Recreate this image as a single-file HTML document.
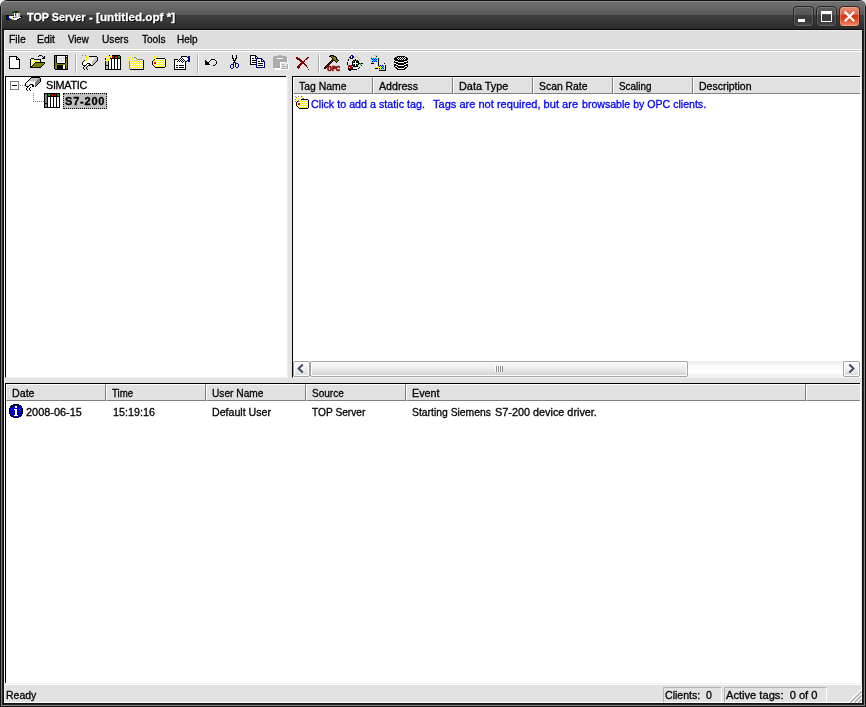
<!DOCTYPE html>
<html><head><meta charset="utf-8"><title>TOP Server</title>
<style>
*{box-sizing:border-box;margin:0;padding:0}
html,body{width:866px;height:707px;overflow:hidden;background:#fff}
body{position:relative;font-family:"Liberation Sans",sans-serif;font-size:11px;color:#000;-webkit-font-smoothing:none}
.a{position:absolute}
.t{transform-origin:0 0;position:absolute;white-space:pre;line-height:13px;height:13px;-webkit-text-stroke:.3px currentColor}
#win{will-change:transform;left:0;top:0;width:866px;height:707px;background:#111;border-radius:7px 7px 0 0;overflow:hidden}
#title{left:1px;top:0;width:864px;height:30px;border-radius:6px 6px 0 0;box-shadow:inset 1px 0 0 #7c7c7c,inset -1px 0 0 #7c7c7c;background:linear-gradient(#111 0,#111 1px,#8a8a8a 1px,#8a8a8a 2px,#6f6f6f 2px,#666 8px,#565656 15px,#3f3f3f 15px,#353535 22px,#2b2b2b 29px,#0c0c0c 29px,#0c0c0c 30px)}
#client{left:4px;top:30px;width:858px;height:673px;background:#e2e2e2}
#menubar{left:4px;top:30px;width:858px;height:19px;background:#dedede;border-top:1px solid #ebebeb}
.hdr{position:absolute;height:17px;background:#e1e1e1;border-left:1px solid #fff;border-top:1px solid #fff;border-right:1px solid #7c7c7c;border-bottom:1px solid #808080}
.panel{position:absolute;background:#fff}

.cb{width:21px;height:21px;border-radius:4px;border:1px solid #262626;box-shadow:inset 0 0 0 1px rgba(255,255,255,.16);background:linear-gradient(#5f5f5f 0,#545454 8px,#3d3d3d 8px,#3a3a3a 14px,#484848 19px)}
.cb.red{background:linear-gradient(#e9917a 0,#dd6146 8px,#d9340f 8px,#e0421c 12px,#f08e70 19px);border-color:#3a2620;box-shadow:inset 0 0 0 1px rgba(255,200,180,.35)}
.sep{width:2px;height:19px;border-left:1px solid #b4b4b4;border-right:1px solid #fff}

.sbtn{width:17px;height:16px;border:1px solid #a4a4a4;border-radius:2px;box-shadow:inset 0 0 0 1px #fff;background:linear-gradient(#fdfdfd 0,#f2f2f2 45%,#dedede 85%,#d6d6d6 100%)}
.pane{height:16px;border-top:1px solid #b4b4b4;border-left:1px solid #b4b4b4;border-right:1px solid #fff;border-bottom:1px solid #fff}
</style></head><body>
<div class="a" style="left:858px;top:0;width:8px;height:8px;background:#dcdcdc"></div>
<div id="win" class="a">
<div id="title" class="a"></div>
<div class="a" style="left:1px;top:29px;width:1px;height:677px;background:#808080"></div>
<div class="a" style="left:2px;top:30px;width:1px;height:675px;background:#222"></div>
<div class="a" style="left:864px;top:29px;width:1px;height:677px;background:#808080"></div>
<div class="a" style="left:863px;top:30px;width:1px;height:675px;background:#222"></div>
<div class="a" style="left:1px;top:705px;width:864px;height:1px;background:#808080"></div>
<div class="a" style="left:2px;top:704px;width:862px;height:1px;background:#222"></div>
<div id="client" class="a"></div>
<div id="menubar" class="a"></div>

<!-- title text -->
<div class="t" id="ttl0" style="left:26.5px;top:11px;color:#fff;font-weight:bold;font-size:11.4px;text-shadow:1px 1px 0 #000;transform:scaleX(0.95)">TOP Server</div>
<div class="t" id="ttl1" style="left:89px;top:11px;color:#fff;font-weight:bold;font-size:11.4px;text-shadow:1px 1px 0 #000;transform:scaleX(1)">-</div>
<div class="t" id="ttl2" style="left:96px;top:11px;color:#fff;font-weight:bold;font-size:11.4px;text-shadow:1px 1px 0 #000;transform:scaleX(1.025)">[untitled.opf *]</div>
<!-- caption buttons -->
<div class="a cb" style="left:793px;top:6px"><div class="a" style="left:4px;top:12px;width:7px;height:3px;background:#fff"></div></div>
<div class="a cb" style="left:816px;top:6px"><div class="a" style="left:4px;top:4px;width:11px;height:11px;border:1px solid #fff;border-top-width:3px"></div></div>
<div class="a cb red" style="left:839px;top:6px"><svg class="a" style="left:-1px;top:-1px" width="21" height="21" viewBox="0 0 21 21"><path d="M5.8 5.8 L15.2 15.2 M15.2 5.8 L5.8 15.2" stroke="#fff" stroke-width="2.3" fill="none"/></svg></div>
<!-- menu -->
<div class="t" style="left:9px;top:33px;transform:scaleX(0.94)">File</div>
<div class="t" style="left:37px;top:33px;transform:scaleX(0.95)">Edit</div>
<div class="t" style="left:68px;top:33px;transform:scaleX(0.871)">View</div>
<div class="t" style="left:101.5px;top:33px;transform:scaleX(0.921)">Users</div>
<div class="t" style="left:141.5px;top:33px;transform:scaleX(0.912)">Tools</div>
<div class="t" style="left:177px;top:33px;transform:scaleX(0.914)">Help</div>
<div class="a" style="left:4px;top:49px;width:858px;height:3px;background:#fff"></div>
<div class="a" style="left:4px;top:50px;width:858px;height:1px;background:#c4c4c4"></div>
<!-- toolbar separators -->
<div class="a sep" style="left:75px;top:54px"></div>
<div class="a sep" style="left:197px;top:54px"></div>
<div class="a sep" style="left:318px;top:54px"></div>
<!-- tree panel -->
<div class="panel" id="tree" style="left:5px;top:76px;width:281px;height:302px;border-top:1px solid #000;border-left:1px solid #000;border-bottom:1px solid #f4f4f4"></div>
<div class="a" style="left:286px;top:76px;width:1px;height:302px;background:#fff"></div>
<div class="a" style="left:287px;top:76px;width:1px;height:302px;background:#ececec"></div>
<!-- right panel -->
<div class="panel" id="tags" style="left:292px;top:76px;width:568px;height:302px;border-top:1px solid #000;border-left:1px solid #000;border-bottom:1px solid #f4f4f4"></div>
<!-- bottom panel -->
<div class="panel" id="log" style="left:5px;top:383px;width:855px;height:300px;border-top:1px solid #000;border-left:1px solid #000"></div>

<div class="a" style="left:860px;top:76px;width:1px;height:302px;background:#fff"></div>
<div class="a" style="left:860px;top:383px;width:1px;height:301px;background:#fff"></div>
<!-- tags header -->
<div class="hdr" style="left:293px;top:77px;width:80px"></div>
<div class="hdr" style="left:373px;top:77px;width:80px"></div>
<div class="hdr" style="left:453px;top:77px;width:80px"></div>
<div class="hdr" style="left:533px;top:77px;width:80px"></div>
<div class="hdr" style="left:613px;top:77px;width:80px"></div>
<div class="hdr" style="left:693px;top:77px;width:167px;border-right:0"></div>
<div class="t" style="left:299px;top:80px;transform:scaleX(0.946)">Tag Name</div>
<div class="t" style="left:378.5px;top:80px;transform:scaleX(0.965)">Address</div>
<div class="t" style="left:458.5px;top:80px;transform:scaleX(0.988)">Data Type</div>
<div class="t" style="left:538.5px;top:80px;transform:scaleX(0.945)">Scan Rate</div>
<div class="t" style="left:618.5px;top:80px;transform:scaleX(0.900)">Scaling</div>
<div class="t" style="left:698.5px;top:80px;transform:scaleX(0.955)">Description</div>
<div class="t" style="left:310.5px;top:98px;color:#0000ff;transform:scaleX(0.975)">Click to add a static tag.</div>
<div class="t" style="left:433px;top:98px;color:#0000ff;transform:scaleX(1.005)">Tags are not required, but are</div>
<div class="t" style="left:582px;top:98px;color:#0000ff;transform:scaleX(0.962)">browsable by OPC clients.</div>
<!-- h scrollbar -->
<div class="a" id="hsb" style="left:293px;top:361px;width:567px;height:16px;background:linear-gradient(#ececec 0,#fbfbfb 35%,#fff 70%,#ececec 100%)"></div>
<div class="a sbtn" style="left:293px;top:361px"><svg width="15" height="14" class="a" style="left:0;top:0"><path d="M8.8 2.6 L4.6 6.5 L8.8 10.4" stroke="#3f4c63" stroke-width="2" fill="none"/></svg></div>
<div class="a sbtn" style="left:843px;top:361px"><svg width="15" height="14" class="a" style="left:0;top:0"><path d="M5.3 2.6 L9.5 6.5 L5.3 10.4" stroke="#3f4c63" stroke-width="2" fill="none"/></svg></div>
<div class="a sbtn" id="thumb" style="left:310px;top:361px;width:378px;background:linear-gradient(#f8f8f8 0,#eeeeee 40%,#e0e0e0 70%,#d2d2d2 100%)"></div>
<div class="a" style="left:495px;top:366px;width:2px;height:6px;background:linear-gradient(90deg,#fff 50%,#8e8e8e 50%)"></div>
<div class="a" style="left:497px;top:366px;width:2px;height:6px;background:linear-gradient(90deg,#fff 50%,#8e8e8e 50%)"></div>
<div class="a" style="left:499px;top:366px;width:2px;height:6px;background:linear-gradient(90deg,#fff 50%,#8e8e8e 50%)"></div>
<div class="a" style="left:501px;top:366px;width:2px;height:6px;background:linear-gradient(90deg,#fff 50%,#8e8e8e 50%)"></div>
<!-- log header -->
<div class="hdr" style="left:6px;top:384px;width:100px"></div>
<div class="hdr" style="left:106px;top:384px;width:100px"></div>
<div class="hdr" style="left:206px;top:384px;width:100px"></div>
<div class="hdr" style="left:306px;top:384px;width:100px"></div>
<div class="hdr" style="left:406px;top:384px;width:400px"></div>
<div class="hdr" style="left:806px;top:384px;width:54px;border-right:0"></div>
<div class="t" style="left:12px;top:387px;transform:scaleX(0.971)">Date</div>
<div class="t" style="left:112px;top:387px;transform:scaleX(0.879)">Time</div>
<div class="t" style="left:212px;top:387px;transform:scaleX(0.925)">User Name</div>
<div class="t" style="left:312px;top:387px;transform:scaleX(0.911)">Source</div>
<div class="t" style="left:411.5px;top:387px;transform:scaleX(0.979)">Event</div>
<div class="t" style="left:26px;top:406px;transform:scaleX(0.993)">2008-06-15</div>
<div class="t" style="left:113px;top:406px;transform:scaleX(0.979)">15:19:16</div>
<div class="t" style="left:212px;top:406px;transform:scaleX(0.966)">Default User</div>
<div class="t" style="left:312px;top:406px;transform:scaleX(0.926)">TOP Server</div>
<div class="t" style="left:411.5px;top:406px;transform:scaleX(0.943)">Starting Siemens</div>
<div class="t" style="left:495px;top:406px;transform:scaleX(0.986)">S7-200 device driver.</div>
<!-- status bar -->
<div class="a" style="left:4px;top:683px;width:858px;height:1px;background:#f0f0f0"></div>
<div class="a" style="left:4px;top:684px;width:858px;height:1px;background:#fff"></div>
<div class="a" style="left:4px;top:31px;width:1px;height:672px;background:#f4f4f4"></div>
<div class="a" style="left:861px;top:685px;width:1px;height:18px;background:#fff"></div>
<div class="a" style="left:4px;top:702px;width:858px;height:1px;background:#fff"></div>
<div class="t" style="left:5.5px;top:689px;transform:scaleX(0.953)">Ready</div>
<div class="a pane" style="left:663px;top:687px;width:59px"></div>
<div class="a pane" style="left:724px;top:687px;width:103px"></div>
<div class="t" style="left:665px;top:689px;transform:scaleX(0.961)">Clients:  0</div>
<div class="t" style="left:725.5px;top:689px;transform:scaleX(1.011)">Active tags:  0 of 0</div>
<svg class="a" style="left:848px;top:689px" width="14" height="14" shape-rendering="crispEdges"><path d="M13 1L1 13M13 5L5 13M13 9L9 13" stroke="#fff" stroke-width="1.4" fill="none" shape-rendering="auto"/><path d="M13.5 2.5L2.5 13.5M13.5 6.5L6.5 13.5M13.5 10.5L10.5 13.5" stroke="#a8a8a8" stroke-width="1.4" fill="none" shape-rendering="auto"/></svg>
<!-- tree -->
<div class="a" style="left:10px;top:81px;width:9px;height:9px;border:1px solid #808080;background:#fff"></div>
<div class="a" style="left:12px;top:85px;width:5px;height:1px;background:#000"></div>
<div class="a" style="left:20px;top:85px;width:5px;height:1px;background-image:linear-gradient(90deg,#808080 50%,transparent 50%);background-size:2px 1px"></div>
<div class="a" style="left:33px;top:93px;width:1px;height:8px;background-image:linear-gradient(#808080 50%,transparent 50%);background-size:1px 2px"></div>
<div class="a" style="left:33px;top:101px;width:11px;height:1px;background-image:linear-gradient(90deg,#808080 50%,transparent 50%);background-size:2px 1px"></div>
<div class="t" style="left:46px;top:79px;letter-spacing:-.3px;transform:scaleX(0.981)">SIMATIC</div>
<div class="a" style="left:63px;top:93px;width:44px;height:16px;background:#c0c0c0;border:1px dotted #000"></div>
<div class="t" style="left:65px;top:95px;font-weight:bold;letter-spacing:.8px">S7-200</div>
<!-- ICONS START -->
<svg class="a" width="0" height="0" style="left:0;top:0"><defs><pattern id="dy" width="2" height="2" patternUnits="userSpaceOnUse"><rect width="2" height="2" fill="#ffff00"/><rect x="1" width="1" height="1" fill="#fff"/><rect y="1" width="1" height="1" fill="#fff"/></pattern><pattern id="dk" width="2" height="2" patternUnits="userSpaceOnUse"><rect width="2" height="2" fill="#fff"/><rect x="1" width="1" height="1" fill="#000"/><rect y="1" width="1" height="1" fill="#000"/></pattern><pattern id="db" width="2" height="2" patternUnits="userSpaceOnUse"><rect width="2" height="2" fill="#0000ff"/><rect width="1" height="1" fill="#000080"/><rect x="1" y="1" width="1" height="1" fill="#000080"/></pattern></defs></svg>
<svg class="a ic" style="left:7px;top:55px" width="16" height="14" viewBox="0 0 16 14" shape-rendering="crispEdges"><path fill="#000" d="M2 1h8v1h-8zM2 2h1v1h-1zM9 2h2v1h-2zM2 3h1v1h-1zM9 3h1v1h-1zM11 3h1v1h-1zM2 4h1v1h-1zM9 4h4v1h-4zM2 5h1v1h-1zM12 5h1v1h-1zM2 6h1v1h-1zM12 6h1v1h-1zM2 7h1v1h-1zM12 7h1v1h-1zM2 8h1v1h-1zM12 8h1v1h-1zM2 9h1v1h-1zM12 9h1v1h-1zM2 10h1v1h-1zM12 10h1v1h-1zM2 11h1v1h-1zM12 11h1v1h-1zM2 12h1v1h-1zM12 12h1v1h-1zM2 13h11v1h-11z"/><path fill="#fff" d="M3 2h6v1h-6zM3 3h6v1h-6zM10 3h1v1h-1zM3 4h6v1h-6zM3 5h9v1h-9zM3 6h9v1h-9zM3 7h9v1h-9zM3 8h9v1h-9zM3 9h9v1h-9zM3 10h9v1h-9zM3 11h9v1h-9zM3 12h9v1h-9z"/></svg>
<svg class="a ic" style="left:30px;top:55px" width="16" height="13" viewBox="0 0 16 13" shape-rendering="crispEdges"><path fill="#000" d="M9 0h3v1h-3zM8 1h1v1h-1zM12 1h1v1h-1zM14 1h1v1h-1zM13 2h2v1h-2zM1 3h3v1h-3zM12 3h3v1h-3zM0 4h1v1h-1zM4 4h7v1h-7zM0 5h1v1h-1zM10 5h1v1h-1zM0 6h1v1h-1zM10 6h1v1h-1zM0 7h1v1h-1zM5 7h10v1h-10zM0 8h1v1h-1zM4 8h1v1h-1zM14 8h1v1h-1zM0 9h1v1h-1zM3 9h1v1h-1zM13 9h1v1h-1zM0 10h1v1h-1zM2 10h1v1h-1zM12 10h1v1h-1zM0 11h2v1h-2zM11 11h1v1h-1zM0 12h11v1h-11z"/><path fill="url(#dy)" d="M1 4h3v1h-3zM1 5h9v1h-9zM1 6h9v1h-9zM1 7h4v1h-4zM1 8h3v1h-3zM1 9h2v1h-2zM1 10h1v1h-1z"/><path fill="#808000" d="M5 8h9v1h-9zM4 9h9v1h-9zM3 10h9v1h-9zM2 11h9v1h-9z"/></svg>
<svg class="a ic" style="left:53px;top:55px" width="16" height="15" viewBox="0 0 16 15" shape-rendering="crispEdges"><path fill="#000" d="M1 0h14v1h-14zM1 1h1v1h-1zM3 1h1v1h-1zM12 1h1v1h-1zM14 1h1v1h-1zM1 2h1v1h-1zM3 2h1v1h-1zM12 2h3v1h-3zM1 3h1v1h-1zM3 3h1v1h-1zM12 3h1v1h-1zM14 3h1v1h-1zM1 4h1v1h-1zM3 4h1v1h-1zM12 4h1v1h-1zM14 4h1v1h-1zM1 5h1v1h-1zM3 5h1v1h-1zM12 5h1v1h-1zM14 5h1v1h-1zM1 6h1v1h-1zM3 6h1v1h-1zM12 6h1v1h-1zM14 6h1v1h-1zM1 7h1v1h-1zM3 7h1v1h-1zM12 7h1v1h-1zM14 7h1v1h-1zM1 8h1v1h-1zM4 8h8v1h-8zM14 8h1v1h-1zM1 9h1v1h-1zM14 9h1v1h-1zM1 10h1v1h-1zM4 10h6v1h-6zM12 10h1v1h-1zM14 10h1v1h-1zM1 11h1v1h-1zM4 11h6v1h-6zM12 11h1v1h-1zM14 11h1v1h-1zM1 12h1v1h-1zM4 12h6v1h-6zM12 12h1v1h-1zM14 12h1v1h-1zM1 13h1v1h-1zM4 13h6v1h-6zM12 13h1v1h-1zM14 13h1v1h-1zM2 14h13v1h-13z"/><path fill="#808000" d="M2 1h1v1h-1zM2 2h1v1h-1zM2 3h1v1h-1zM13 3h1v1h-1zM2 4h1v1h-1zM13 4h1v1h-1zM2 5h1v1h-1zM13 5h1v1h-1zM2 6h1v1h-1zM13 6h1v1h-1zM2 7h1v1h-1zM13 7h1v1h-1zM2 8h2v1h-2zM12 8h2v1h-2zM2 9h12v1h-12zM2 10h2v1h-2zM13 10h1v1h-1zM2 11h2v1h-2zM13 11h1v1h-1zM2 12h2v1h-2zM13 12h1v1h-1zM2 13h2v1h-2zM13 13h1v1h-1z"/><path fill="#fff" d="M4 1h8v1h-8zM13 1h1v1h-1zM4 2h1v1h-1zM11 2h1v1h-1zM4 3h1v1h-1zM11 3h1v1h-1zM4 4h1v1h-1zM11 4h1v1h-1zM4 5h1v1h-1zM11 5h1v1h-1zM4 6h1v1h-1zM11 6h1v1h-1zM4 7h8v1h-8zM10 10h2v1h-2zM10 11h2v1h-2zM10 12h2v1h-2zM10 13h2v1h-2z"/><path fill="#e2e2e2" d="M5 2h6v1h-6zM5 3h6v1h-6zM5 4h6v1h-6zM5 5h6v1h-6zM5 6h6v1h-6z"/></svg>
<svg class="a ic" style="left:82px;top:55px" width="16" height="15" viewBox="0 0 16 15" shape-rendering="crispEdges"><path fill="#808080" d="M0 0h1v1h-1zM3 0h1v1h-1z"/><path fill="#ffff00" d="M7 0h1v1h-1zM4 1h1v1h-1zM6 1h1v1h-1zM1 2h1v1h-1zM3 2h2v1h-2zM4 3h2v1h-2zM1 4h1v1h-1zM4 4h2v1h-2zM4 5h1v1h-1z"/><path fill="#000" d="M7 1h8v1h-8zM15 2h1v1h-1zM15 3h1v1h-1zM15 4h1v1h-1zM2 5h1v1h-1zM15 5h1v1h-1zM1 6h1v1h-1zM14 6h1v1h-1zM0 7h1v1h-1zM13 7h1v1h-1zM0 8h1v1h-1zM5 8h3v1h-3zM12 8h1v1h-1zM0 9h1v1h-1zM4 9h1v1h-1zM7 9h2v1h-2zM11 9h1v1h-1zM1 10h3v1h-3zM6 10h5v1h-5zM2 11h1v1h-1zM5 11h1v1h-1zM1 12h1v1h-1zM4 12h1v1h-1zM1 13h1v1h-1zM4 13h1v1h-1zM2 14h1v1h-1zM5 14h1v1h-1z"/><path fill="#ececec" d="M6 2h8v1h-8zM6 3h7v1h-7zM6 4h6v1h-6z"/><path fill="#c0c0c0" d="M14 2h1v1h-1zM13 3h2v1h-2zM12 4h3v1h-3zM11 5h4v1h-4zM10 6h4v1h-4zM10 7h3v1h-3zM10 8h2v1h-2zM10 9h1v1h-1z"/><path fill="#fff" d="M5 5h6v1h-6zM2 6h8v1h-8zM1 7h9v1h-9zM1 8h4v1h-4zM8 8h2v1h-2zM1 9h3v1h-3zM5 9h2v1h-2zM9 9h1v1h-1z"/></svg>
<svg class="a ic" style="left:105px;top:55px" width="16" height="15" viewBox="0 0 16 15" shape-rendering="crispEdges"><path fill="#ffff00" d="M0 0h1v1h-1zM6 0h1v1h-1zM1 1h1v1h-1zM3 1h1v1h-1zM5 1h1v1h-1zM0 2h1v1h-1zM2 2h1v1h-1zM2 3h3v1h-3zM1 4h1v1h-1zM3 4h2v1h-2zM0 5h2v1h-2zM3 5h1v1h-1z"/><path fill="#000" d="M4 0h1v1h-1zM7 0h8v1h-8zM9 1h1v1h-1zM12 1h1v1h-1zM15 1h1v1h-1zM9 2h1v1h-1zM12 2h1v1h-1zM15 2h1v1h-1zM0 3h1v1h-1zM5 3h11v1h-11zM0 4h1v1h-1zM6 4h1v1h-1zM9 4h1v1h-1zM12 4h1v1h-1zM15 4h1v1h-1zM6 5h1v1h-1zM9 5h1v1h-1zM12 5h1v1h-1zM15 5h1v1h-1zM0 6h1v1h-1zM3 6h1v1h-1zM6 6h1v1h-1zM9 6h1v1h-1zM12 6h1v1h-1zM15 6h1v1h-1zM0 7h1v1h-1zM3 7h1v1h-1zM6 7h1v1h-1zM9 7h1v1h-1zM12 7h1v1h-1zM15 7h1v1h-1zM0 8h1v1h-1zM3 8h1v1h-1zM6 8h1v1h-1zM9 8h1v1h-1zM12 8h1v1h-1zM15 8h1v1h-1zM0 9h1v1h-1zM3 9h1v1h-1zM6 9h1v1h-1zM9 9h1v1h-1zM12 9h1v1h-1zM15 9h1v1h-1zM0 10h4v1h-4zM6 10h1v1h-1zM9 10h1v1h-1zM12 10h1v1h-1zM15 10h1v1h-1zM0 11h1v1h-1zM3 11h1v1h-1zM6 11h1v1h-1zM9 11h1v1h-1zM12 11h1v1h-1zM15 11h1v1h-1zM0 12h1v1h-1zM3 12h1v1h-1zM6 12h1v1h-1zM9 12h1v1h-1zM12 12h1v1h-1zM15 12h1v1h-1zM0 13h1v1h-1zM3 13h1v1h-1zM6 13h1v1h-1zM9 13h1v1h-1zM12 13h1v1h-1zM15 13h1v1h-1zM0 14h16v1h-16z"/><path fill="#c80000" d="M7 1h2v1h-2zM10 1h2v1h-2zM7 2h2v1h-2zM10 2h2v1h-2z"/><path fill="#00a000" d="M13 1h2v1h-2zM13 2h2v1h-2z"/><path fill="#808080" d="M5 2h1v1h-1z"/><path fill="#fff" d="M6 2h1v1h-1zM5 4h1v1h-1zM7 4h2v1h-2zM10 4h2v1h-2zM13 4h2v1h-2zM4 5h2v1h-2zM7 5h2v1h-2zM10 5h2v1h-2zM13 5h2v1h-2zM4 6h2v1h-2zM7 6h2v1h-2zM10 6h2v1h-2zM13 6h2v1h-2zM4 7h2v1h-2zM7 7h2v1h-2zM10 7h2v1h-2zM13 7h2v1h-2zM4 8h2v1h-2zM7 8h2v1h-2zM10 8h2v1h-2zM13 8h2v1h-2zM4 9h2v1h-2zM7 9h2v1h-2zM10 9h2v1h-2zM13 9h2v1h-2zM4 10h2v1h-2zM7 10h2v1h-2zM10 10h2v1h-2zM13 10h2v1h-2zM4 11h2v1h-2zM7 11h2v1h-2zM10 11h2v1h-2zM13 11h2v1h-2zM4 12h2v1h-2zM7 12h2v1h-2zM10 12h2v1h-2zM13 12h2v1h-2zM4 13h2v1h-2zM7 13h2v1h-2zM10 13h2v1h-2zM13 13h2v1h-2z"/><path fill="#c0c0c0" d="M1 6h2v1h-2zM1 7h2v1h-2zM1 8h2v1h-2zM1 9h2v1h-2zM1 11h2v1h-2zM1 12h2v1h-2zM1 13h2v1h-2z"/></svg>
<svg class="a ic" style="left:128px;top:55px" width="16" height="15" viewBox="0 0 16 15" shape-rendering="crispEdges"><path fill="#ffff00" d="M6 0h1v1h-1zM3 1h1v1h-1zM5 1h1v1h-1zM0 2h1v1h-1zM2 2h2v1h-2zM3 3h2v1h-2zM0 4h1v1h-1zM4 4h1v1h-1zM8 4h1v1h-1zM3 5h1v1h-1z"/><path fill="#808080" d="M6 2h2v1h-2zM8 3h1v1h-1zM9 4h6v1h-6zM1 6h1v1h-1zM1 7h1v1h-1zM1 8h1v1h-1zM1 9h1v1h-1zM1 10h1v1h-1zM1 11h1v1h-1zM1 12h1v1h-1zM1 13h1v1h-1z"/><path fill="url(#dy)" d="M9 5h6v1h-6zM2 6h13v1h-13zM2 7h13v1h-13zM2 8h13v1h-13zM2 9h13v1h-13zM2 10h13v1h-13zM2 11h13v1h-13zM2 12h13v1h-13zM2 13h13v1h-13z"/><path fill="#000" d="M15 5h1v1h-1zM15 6h1v1h-1zM15 7h1v1h-1zM15 8h1v1h-1zM15 9h1v1h-1zM15 10h1v1h-1zM15 11h1v1h-1zM15 12h1v1h-1zM15 13h1v1h-1zM2 14h14v1h-14z"/></svg>
<svg class="a ic" style="left:151px;top:55px" width="16" height="13" viewBox="0 0 16 13" shape-rendering="crispEdges"><path fill="#ffff00" d="M6 0h1v1h-1zM3 1h1v1h-1zM5 1h1v1h-1zM0 2h1v1h-1zM2 2h2v1h-2zM3 3h1v1h-1zM0 4h1v1h-1zM4 4h1v1h-1zM3 5h1v1h-1z"/><path fill="#000" d="M5 3h9v1h-9zM3 4h1v1h-1zM14 4h1v1h-1zM2 5h1v1h-1zM14 5h1v1h-1zM1 6h1v1h-1zM14 6h1v1h-1zM1 7h1v1h-1zM14 7h1v1h-1zM1 8h1v1h-1zM14 8h1v1h-1zM1 9h1v1h-1zM14 9h1v1h-1zM2 10h1v1h-1zM14 10h1v1h-1zM3 11h1v1h-1zM14 11h1v1h-1zM4 12h10v1h-10z"/><path fill="url(#dy)" d="M5 4h9v1h-9zM4 5h10v1h-10zM2 6h12v1h-12zM2 7h1v1h-1zM5 7h9v1h-9zM2 8h1v1h-1zM5 8h9v1h-9zM2 9h12v1h-12zM3 10h11v1h-11zM4 11h10v1h-10z"/><path fill="#ff0000" d="M3 7h2v1h-2zM3 8h2v1h-2z"/></svg>
<svg class="a ic" style="left:174px;top:55px" width="16" height="15" viewBox="0 0 16 15" shape-rendering="crispEdges"><path fill="#000" d="M7 1h6v1h-6zM13 2h1v1h-1zM0 4h4v1h-4zM0 5h1v1h-1zM13 5h1v1h-1zM0 6h1v1h-1zM11 6h2v1h-2zM0 7h1v1h-1zM11 7h1v1h-1zM0 8h1v1h-1zM11 8h1v1h-1zM0 9h1v1h-1zM11 9h1v1h-1zM0 10h1v1h-1zM2 10h2v1h-2zM5 10h5v1h-5zM11 10h1v1h-1zM0 11h1v1h-1zM11 11h1v1h-1zM0 12h1v1h-1zM2 12h2v1h-2zM5 12h5v1h-5zM11 12h1v1h-1zM0 13h1v1h-1zM11 13h1v1h-1zM0 14h12v1h-12z"/><path fill="#000080" d="M14 1h2v1h-2zM14 2h2v1h-2zM14 3h2v1h-2zM14 4h2v1h-2zM14 5h2v1h-2zM14 6h2v1h-2z"/><path fill="url(#dk)" d="M6 2h2v1h-2zM5 3h4v1h-4zM4 4h6v1h-6zM3 5h8v1h-8zM2 6h9v1h-9zM3 7h1v1h-1zM7 7h3v1h-3zM8 8h1v1h-1z"/><path fill="#fff" d="M8 2h5v1h-5zM9 3h5v1h-5zM10 4h4v1h-4zM1 5h2v1h-2zM11 5h2v1h-2zM1 6h1v1h-1zM1 7h2v1h-2zM4 7h3v1h-3zM10 7h1v1h-1zM1 8h7v1h-7zM9 8h2v1h-2zM1 9h10v1h-10zM1 10h1v1h-1zM4 10h1v1h-1zM10 10h1v1h-1zM1 11h10v1h-10zM1 12h1v1h-1zM4 12h1v1h-1zM10 12h1v1h-1zM1 13h10v1h-10z"/></svg>
<svg class="a ic" style="left:203px;top:55px" width="16" height="11" viewBox="0 0 16 11" shape-rendering="crispEdges"><path fill="#000" d="M8 4h4v1h-4zM2 5h1v1h-1zM7 5h1v1h-1zM12 5h1v1h-1zM2 6h2v1h-2zM6 6h1v1h-1zM13 6h1v1h-1zM2 7h4v1h-4zM13 7h1v1h-1zM2 8h4v1h-4zM13 8h1v1h-1zM2 9h5v1h-5zM12 9h1v1h-1zM10 10h2v1h-2z"/></svg>
<svg class="a ic" style="left:226px;top:55px" width="16" height="14" viewBox="0 0 16 14" shape-rendering="crispEdges"><path fill="#000" d="M6 0h1v1h-1zM10 0h1v1h-1zM6 1h1v1h-1zM10 1h1v1h-1zM6 2h1v1h-1zM10 2h1v1h-1zM6 3h2v1h-2zM9 3h2v1h-2zM7 4h1v1h-1zM9 4h1v1h-1zM7 5h3v1h-3zM8 6h1v1h-1zM8 7h1v1h-1z"/><path fill="#000080" d="M7 7h1v1h-1zM9 7h1v1h-1zM7 8h1v1h-1zM9 8h3v1h-3zM5 9h3v1h-3zM9 9h1v1h-1zM12 9h1v1h-1zM4 10h1v1h-1zM7 10h1v1h-1zM9 10h1v1h-1zM12 10h1v1h-1zM4 11h1v1h-1zM7 11h1v1h-1zM9 11h1v1h-1zM12 11h1v1h-1zM4 12h1v1h-1zM7 12h1v1h-1zM10 12h2v1h-2zM5 13h2v1h-2z"/></svg>
<svg class="a ic" style="left:249px;top:55px" width="16" height="13" viewBox="0 0 16 13" shape-rendering="crispEdges"><path fill="#000" d="M1 0h6v1h-6zM1 1h1v1h-1zM6 1h2v1h-2zM1 2h1v1h-1zM6 2h1v1h-1zM8 2h1v1h-1zM1 3h1v1h-1zM3 3h2v1h-2zM6 3h1v1h-1zM1 4h1v1h-1zM1 5h1v1h-1zM3 5h4v1h-4zM1 6h1v1h-1zM9 6h2v1h-2zM1 7h1v1h-1zM3 7h4v1h-4zM1 8h1v1h-1zM9 8h5v1h-5zM1 9h6v1h-6zM9 10h5v1h-5z"/><path fill="#fff" d="M2 1h4v1h-4zM2 2h4v1h-4zM7 2h1v1h-1zM2 3h1v1h-1zM5 3h1v1h-1zM2 4h5v1h-5zM8 4h4v1h-4zM2 5h1v1h-1zM8 5h4v1h-4zM13 5h1v1h-1zM2 6h5v1h-5zM8 6h1v1h-1zM11 6h1v1h-1zM2 7h1v1h-1zM8 7h7v1h-7zM2 8h5v1h-5zM8 8h1v1h-1zM14 8h1v1h-1zM8 9h7v1h-7zM8 10h1v1h-1zM14 10h1v1h-1zM8 11h7v1h-7z"/><path fill="#000080" d="M7 3h6v1h-6zM7 4h1v1h-1zM12 4h2v1h-2zM7 5h1v1h-1zM12 5h1v1h-1zM14 5h1v1h-1zM7 6h1v1h-1zM12 6h4v1h-4zM7 7h1v1h-1zM15 7h1v1h-1zM7 8h1v1h-1zM15 8h1v1h-1zM7 9h1v1h-1zM15 9h1v1h-1zM7 10h1v1h-1zM15 10h1v1h-1zM7 11h1v1h-1zM15 11h1v1h-1zM7 12h9v1h-9z"/></svg>
<svg class="a ic" style="left:272px;top:55px" width="17" height="15" viewBox="0 0 17 15" shape-rendering="crispEdges"><path fill="#ababab" d="M6 0h4v1h-4zM2 1h12v1h-12zM1 2h14v1h-14zM1 3h4v1h-4zM11 3h4v1h-4zM1 4h14v1h-14zM1 5h14v1h-14zM1 6h14v1h-14zM1 7h7v1h-7zM14 7h1v1h-1zM1 8h7v1h-7zM1 9h7v1h-7zM10 9h2v1h-2zM15 9h1v1h-1zM1 10h7v1h-7zM15 10h1v1h-1zM1 11h7v1h-7zM10 11h4v1h-4zM15 11h1v1h-1zM1 12h7v1h-7zM15 12h1v1h-1zM9 13h7v1h-7z"/><path fill="#fff" d="M5 3h6v1h-6zM15 3h1v1h-1zM15 4h1v1h-1zM15 5h1v1h-1zM15 6h1v1h-1zM8 7h6v1h-6zM15 7h1v1h-1zM8 8h1v1h-1zM14 8h3v1h-3zM8 9h1v1h-1zM16 9h1v1h-1zM8 10h1v1h-1zM16 10h1v1h-1zM8 11h1v1h-1zM16 11h1v1h-1zM8 12h1v1h-1zM16 12h1v1h-1zM2 13h7v1h-7zM16 13h1v1h-1zM3 14h14v1h-14z"/><path fill="#e2e2e2" d="M9 8h5v1h-5zM9 9h1v1h-1zM12 9h3v1h-3zM9 10h6v1h-6zM9 11h1v1h-1zM14 11h1v1h-1zM9 12h6v1h-6z"/></svg>
<svg class="a ic" style="left:295px;top:55px" width="16" height="15" viewBox="0 0 16 15" shape-rendering="crispEdges"><path fill="#800000" d="M1 2h2v1h-2zM12 2h2v1h-2zM1 3h4v1h-4zM11 3h2v1h-2zM2 4h4v1h-4zM10 4h2v1h-2zM4 5h3v1h-3zM9 5h1v1h-1zM5 6h5v1h-5zM6 7h3v1h-3zM5 8h5v1h-5zM4 9h3v1h-3zM9 9h2v1h-2zM3 10h3v1h-3zM10 10h2v1h-2zM2 11h3v1h-3zM11 11h1v1h-1zM2 12h3v1h-3zM12 12h1v1h-1zM3 13h1v1h-1zM13 14h1v1h-1z"/></svg>
<svg class="a ic" style="left:324px;top:55px" width="16" height="17" viewBox="0 0 16 17" shape-rendering="crispEdges"><path fill="#000" d="M6 0h4v1h-4zM5 1h2v1h-2zM9 1h3v1h-3zM7 2h1v1h-1zM12 2h1v1h-1zM8 3h1v1h-1zM12 3h1v1h-1zM8 4h1v1h-1zM12 4h2v1h-2zM7 5h1v1h-1zM9 5h2v1h-2zM14 5h1v1h-1zM6 6h1v1h-1zM8 6h1v1h-1zM11 6h1v1h-1zM13 6h1v1h-1zM5 7h1v1h-1zM7 7h1v1h-1zM12 7h1v1h-1zM4 8h1v1h-1zM6 8h1v1h-1zM3 9h1v1h-1zM5 9h1v1h-1zM2 10h1v1h-1zM4 10h1v1h-1zM1 11h1v1h-1zM3 11h1v1h-1zM0 12h1v1h-1zM2 12h1v1h-1zM0 13h2v1h-2z"/><path fill="#808000" d="M7 1h2v1h-2zM8 2h4v1h-4zM9 3h3v1h-3zM9 4h3v1h-3zM11 5h3v1h-3zM12 6h1v1h-1z"/><path fill="#800000" d="M8 5h1v1h-1zM7 6h1v1h-1zM6 7h1v1h-1zM5 8h1v1h-1zM4 9h1v1h-1zM3 10h1v1h-1zM2 11h1v1h-1zM1 12h1v1h-1z"/><text x="3.3" y="16" font-family="Liberation Sans,sans-serif" font-weight="bold" font-size="6.9" fill="#800000" textLength="12.8" lengthAdjust="spacingAndGlyphs" stroke="#800000" stroke-width=".7" style="shape-rendering:auto">OPC</text></svg>
<svg class="a ic" style="left:370px;top:55px" width="16" height="16" viewBox="0 0 16 16" shape-rendering="crispEdges"><path fill="#c0c0c0" d="M4 0h3v1h-3zM1 1h1v1h-1zM1 2h1v1h-1zM1 4h1v1h-1zM1 5h1v1h-1zM1 6h1v1h-1zM1 7h3v1h-3zM9 14h6v1h-6z"/><path fill="#000" d="M6 1h1v1h-1zM1 3h1v1h-1zM8 3h1v1h-1zM8 4h1v1h-1zM8 5h1v1h-1zM8 6h1v1h-1zM8 7h1v1h-1zM1 8h3v1h-3zM8 8h1v1h-1zM14 8h1v1h-1zM8 9h1v1h-1zM8 10h1v1h-1zM15 10h1v1h-1zM15 11h1v1h-1zM15 12h1v1h-1zM5 13h3v1h-3zM15 13h1v1h-1zM15 14h1v1h-1zM9 15h7v1h-7z"/><path fill="#00ffff" d="M2 3h1v1h-1zM4 3h1v1h-1zM6 3h1v1h-1zM3 4h1v1h-1zM5 4h1v1h-1zM2 5h1v1h-1zM4 5h1v1h-1zM6 5h1v1h-1zM3 6h1v1h-1zM5 6h1v1h-1zM9 10h1v1h-1zM11 10h1v1h-1zM13 10h1v1h-1zM12 11h1v1h-1zM13 12h1v1h-1zM12 13h1v1h-1z"/><path fill="#0000ff" d="M3 3h1v1h-1zM5 3h1v1h-1zM2 4h1v1h-1zM4 4h1v1h-1zM6 4h1v1h-1zM3 5h1v1h-1zM5 5h1v1h-1zM2 6h1v1h-1zM4 6h1v1h-1zM6 6h1v1h-1zM10 10h1v1h-1zM12 10h1v1h-1zM9 11h1v1h-1zM11 11h1v1h-1zM13 11h1v1h-1zM12 12h1v1h-1zM9 13h1v1h-1zM11 13h1v1h-1zM13 13h1v1h-1z"/><path fill="#ffff00" d="M5 7h1v1h-1zM5 8h1v1h-1zM5 9h1v1h-1zM5 10h1v1h-1zM5 11h1v1h-1zM10 11h1v1h-1zM5 12h7v1h-7zM10 13h1v1h-1z"/><path fill="#fff" d="M6 9h1v1h-1zM6 10h1v1h-1zM6 11h1v1h-1z"/></svg>
<svg class="a ic" style="left:393px;top:55px" width="16" height="15" viewBox="0 0 16 15" shape-rendering="crispEdges"><path fill="#000" d="M4 1h8v1h-8zM2 2h3v1h-3zM6 2h1v1h-1zM8 2h1v1h-1zM10 2h1v1h-1zM12 2h2v1h-2zM1 3h3v1h-3zM5 3h1v1h-1zM7 3h1v1h-1zM9 3h1v1h-1zM11 3h1v1h-1zM13 3h2v1h-2zM1 4h4v1h-4zM6 4h1v1h-1zM8 4h1v1h-1zM10 4h1v1h-1zM12 4h3v1h-3zM2 5h12v1h-12zM1 6h1v1h-1zM5 6h6v1h-6zM14 6h1v1h-1zM1 7h4v1h-4zM11 7h4v1h-4zM3 8h10v1h-10zM1 9h2v1h-2zM5 9h6v1h-6zM13 9h2v1h-2zM1 10h4v1h-4zM11 10h4v1h-4zM1 11h1v1h-1zM4 11h8v1h-8zM14 11h1v1h-1zM2 12h2v1h-2zM5 12h6v1h-6zM12 12h2v1h-2zM3 13h2v1h-2zM11 13h2v1h-2zM4 14h8v1h-8z"/><path fill="#fff" d="M5 2h1v1h-1zM7 2h1v1h-1zM9 2h1v1h-1zM11 2h1v1h-1zM4 3h1v1h-1zM6 3h1v1h-1zM8 3h1v1h-1zM10 3h1v1h-1zM12 3h1v1h-1zM5 4h1v1h-1zM7 4h1v1h-1zM9 4h1v1h-1zM11 4h1v1h-1zM2 6h3v1h-3zM11 6h3v1h-3zM5 7h6v1h-6zM1 8h2v1h-2zM13 8h2v1h-2zM3 9h2v1h-2zM11 9h2v1h-2zM5 10h6v1h-6zM2 11h2v1h-2zM12 11h2v1h-2zM4 12h1v1h-1zM11 12h1v1h-1zM5 13h6v1h-6z"/></svg>
<svg class="a ic" style="left:6px;top:10px" width="16" height="10" viewBox="0 0 16 10" shape-rendering="crispEdges"><path fill="#404040" d="M6 1h2v1h-2zM6 2h2v1h-2z"/><path fill="#005800" d="M8 1h1v1h-1zM11 1h2v1h-2zM8 2h1v1h-1zM11 2h2v1h-2z"/><path fill="#580000" d="M9 1h2v1h-2zM9 2h2v1h-2z"/><path fill="#fff" d="M8 3h1v1h-1zM11 3h1v1h-1zM8 4h1v1h-1zM11 4h1v1h-1zM8 5h1v1h-1zM11 5h1v1h-1zM3 6h6v1h-6zM11 6h1v1h-1zM3 7h4v1h-4zM12 7h3v1h-3zM5 8h8v1h-8zM8 9h3v1h-3z"/><path fill="#808080" d="M9 3h1v1h-1zM9 5h1v1h-1zM9 7h1v1h-1z"/><path fill="#c0c0c0" d="M10 3h1v1h-1zM12 3h2v1h-2zM10 4h1v1h-1zM12 4h2v1h-2zM10 5h1v1h-1zM12 5h2v1h-2zM9 6h2v1h-2zM12 6h2v1h-2zM8 7h1v1h-1zM10 7h2v1h-2zM4 8h1v1h-1zM6 9h2v1h-2z"/><path fill="#000" d="M9 4h1v1h-1zM0 5h3v1h-3zM5 5h1v1h-1zM0 6h1v1h-1zM14 6h2v1h-2zM0 7h1v1h-1zM7 7h1v1h-1zM15 7h1v1h-1zM0 8h1v1h-1zM13 8h2v1h-2zM0 9h3v1h-3zM4 9h1v1h-1zM11 9h2v1h-2z"/><path fill="#0000ff" d="M1 6h2v1h-2zM1 7h2v1h-2zM1 8h2v1h-2z"/></svg>
<svg class="a ic" style="left:25px;top:77px" width="16" height="14" viewBox="0 0 16 14" shape-rendering="crispEdges"><path fill="#000" d="M6 0h9v1h-9zM5 1h1v1h-1zM15 1h1v1h-1zM4 2h1v1h-1zM15 2h1v1h-1zM3 3h1v1h-1zM15 3h1v1h-1zM2 4h1v1h-1zM15 4h1v1h-1zM1 5h1v1h-1zM14 5h1v1h-1zM0 6h1v1h-1zM13 6h1v1h-1zM0 7h1v1h-1zM5 7h3v1h-3zM12 7h1v1h-1zM0 8h1v1h-1zM4 8h1v1h-1zM7 8h2v1h-2zM11 8h1v1h-1zM1 9h3v1h-3zM7 9h2v1h-2zM10 9h1v1h-1zM2 10h1v1h-1zM5 10h1v1h-1zM1 11h1v1h-1zM4 11h1v1h-1zM1 12h1v1h-1zM4 12h1v1h-1zM2 13h1v1h-1zM5 13h1v1h-1z"/><path fill="#c0c0c0" d="M6 1h8v1h-8zM5 2h8v1h-8zM4 3h8v1h-8z"/><path fill="#808080" d="M14 1h1v1h-1zM13 2h2v1h-2zM12 3h3v1h-3zM11 4h4v1h-4zM10 5h4v1h-4zM10 6h3v1h-3zM10 7h2v1h-2zM10 8h1v1h-1z"/><path fill="#e2e2e2" d="M3 4h8v1h-8zM1 7h4v1h-4zM8 7h1v1h-1zM1 8h3v1h-3z"/><path fill="#fff" d="M2 5h8v1h-8zM1 6h9v1h-9zM9 7h1v1h-1zM5 8h2v1h-2zM9 8h1v1h-1z"/></svg>
<svg class="a ic" style="left:44px;top:93px" width="16" height="15" viewBox="0 0 16 15" shape-rendering="crispEdges"><path fill="#000" d="M0 0h16v1h-16zM0 1h1v1h-1zM3 1h1v1h-1zM6 1h1v1h-1zM9 1h1v1h-1zM12 1h1v1h-1zM15 1h1v1h-1zM0 2h1v1h-1zM3 2h1v1h-1zM6 2h1v1h-1zM9 2h1v1h-1zM12 2h1v1h-1zM15 2h1v1h-1zM0 3h1v1h-1zM3 3h13v1h-13zM0 4h1v1h-1zM3 4h1v1h-1zM6 4h1v1h-1zM9 4h1v1h-1zM12 4h1v1h-1zM15 4h1v1h-1zM0 5h1v1h-1zM3 5h1v1h-1zM6 5h1v1h-1zM9 5h1v1h-1zM12 5h1v1h-1zM15 5h1v1h-1zM0 6h1v1h-1zM3 6h1v1h-1zM6 6h1v1h-1zM9 6h1v1h-1zM12 6h1v1h-1zM15 6h1v1h-1zM0 7h1v1h-1zM3 7h1v1h-1zM6 7h1v1h-1zM9 7h1v1h-1zM12 7h1v1h-1zM15 7h1v1h-1zM0 8h1v1h-1zM3 8h1v1h-1zM6 8h1v1h-1zM9 8h1v1h-1zM12 8h1v1h-1zM15 8h1v1h-1zM0 9h1v1h-1zM3 9h1v1h-1zM6 9h1v1h-1zM9 9h1v1h-1zM12 9h1v1h-1zM15 9h1v1h-1zM0 10h4v1h-4zM6 10h1v1h-1zM9 10h1v1h-1zM12 10h1v1h-1zM15 10h1v1h-1zM0 11h1v1h-1zM3 11h1v1h-1zM6 11h1v1h-1zM9 11h1v1h-1zM12 11h1v1h-1zM15 11h1v1h-1zM0 12h1v1h-1zM3 12h1v1h-1zM6 12h1v1h-1zM9 12h1v1h-1zM12 12h1v1h-1zM15 12h1v1h-1zM0 13h1v1h-1zM3 13h1v1h-1zM6 13h1v1h-1zM9 13h1v1h-1zM12 13h1v1h-1zM15 13h1v1h-1zM0 14h16v1h-16z"/><path fill="#808080" d="M1 1h2v1h-2zM1 2h2v1h-2zM1 3h2v1h-2zM1 4h2v1h-2zM1 5h2v1h-2zM1 6h2v1h-2zM1 7h2v1h-2zM1 8h2v1h-2zM1 9h2v1h-2zM1 11h2v1h-2zM1 12h2v1h-2zM1 13h2v1h-2z"/><path fill="#00a000" d="M4 1h2v1h-2zM13 1h2v1h-2zM4 2h2v1h-2zM13 2h2v1h-2z"/><path fill="#c80000" d="M7 1h2v1h-2zM10 1h2v1h-2zM7 2h2v1h-2zM10 2h2v1h-2z"/><path fill="#fff" d="M4 4h2v1h-2zM7 4h2v1h-2zM10 4h2v1h-2zM13 4h2v1h-2zM4 5h2v1h-2zM7 5h2v1h-2zM10 5h2v1h-2zM13 5h2v1h-2zM4 6h2v1h-2zM7 6h2v1h-2zM10 6h2v1h-2zM13 6h2v1h-2zM4 7h2v1h-2zM7 7h2v1h-2zM10 7h2v1h-2zM13 7h2v1h-2zM4 8h2v1h-2zM7 8h2v1h-2zM10 8h2v1h-2zM13 8h2v1h-2zM4 9h2v1h-2zM7 9h2v1h-2zM10 9h2v1h-2zM13 9h2v1h-2zM4 10h2v1h-2zM7 10h2v1h-2zM10 10h2v1h-2zM13 10h2v1h-2zM4 11h2v1h-2zM7 11h2v1h-2zM10 11h2v1h-2zM13 11h2v1h-2zM4 12h2v1h-2zM7 12h2v1h-2zM10 12h2v1h-2zM13 12h2v1h-2zM4 13h2v1h-2zM7 13h2v1h-2zM10 13h2v1h-2zM13 13h2v1h-2z"/></svg>
<svg class="a ic" style="left:295px;top:96px" width="14" height="13" viewBox="0 0 14 13" shape-rendering="crispEdges"><path fill="#808080" d="M0 0h1v1h-1zM3 0h1v1h-1zM6 0h1v1h-1zM1 1h1v1h-1zM7 2h2v1h-2zM0 3h1v1h-1zM3 4h1v1h-1zM0 5h1v1h-1zM3 5h1v1h-1z"/><path fill="#ffff00" d="M7 0h1v1h-1zM4 1h1v1h-1zM6 1h1v1h-1zM1 2h1v1h-1zM3 2h2v1h-2zM4 3h1v1h-1zM1 4h1v1h-1zM4 4h2v1h-2zM4 5h1v1h-1zM2 7h1v1h-1zM2 8h1v1h-1z"/><path fill="#000" d="M6 3h7v1h-7zM13 4h1v1h-1zM2 5h1v1h-1zM13 5h1v1h-1zM1 6h1v1h-1zM13 6h1v1h-1zM1 7h1v1h-1zM13 7h1v1h-1zM1 8h1v1h-1zM13 8h1v1h-1zM1 9h1v1h-1zM13 9h1v1h-1zM2 10h1v1h-1zM13 10h1v1h-1zM3 11h1v1h-1zM13 11h1v1h-1zM4 12h9v1h-9z"/><path fill="url(#dy)" d="M6 4h7v1h-7zM5 5h8v1h-8zM2 6h11v1h-11zM5 7h8v1h-8zM5 8h8v1h-8zM2 9h11v1h-11zM3 10h10v1h-10zM4 11h9v1h-9z"/><path fill="#ff0000" d="M3 7h2v1h-2zM3 8h2v1h-2z"/></svg>
<svg class="a ic" style="left:9px;top:404px" width="14" height="14" viewBox="0 0 14 14" shape-rendering="crispEdges"><path fill="#000" d="M4 0h6v1h-6zM2 1h2v1h-2zM10 1h2v1h-2zM1 2h1v1h-1zM12 2h1v1h-1zM1 3h1v1h-1zM12 3h1v1h-1zM0 4h1v1h-1zM13 4h1v1h-1zM0 5h1v1h-1zM13 5h1v1h-1zM0 6h1v1h-1zM13 6h1v1h-1zM0 7h1v1h-1zM13 7h1v1h-1zM0 8h1v1h-1zM13 8h1v1h-1zM0 9h1v1h-1zM13 9h1v1h-1zM1 10h1v1h-1zM12 10h1v1h-1zM1 11h1v1h-1zM12 11h1v1h-1zM2 12h2v1h-2zM10 12h2v1h-2zM4 13h6v1h-6z"/><path fill="url(#db)" d="M4 1h6v1h-6zM2 2h4v1h-4zM8 2h4v1h-4zM2 3h4v1h-4zM8 3h4v1h-4zM1 4h12v1h-12zM1 5h4v1h-4zM8 5h5v1h-5zM1 6h5v1h-5zM8 6h5v1h-5zM1 7h5v1h-5zM8 7h5v1h-5zM1 8h5v1h-5zM8 8h5v1h-5zM1 9h5v1h-5zM8 9h5v1h-5zM2 10h4v1h-4zM8 10h4v1h-4zM2 11h3v1h-3zM9 11h3v1h-3zM4 12h6v1h-6z"/><path fill="#fff" d="M6 2h2v1h-2zM6 3h2v1h-2zM5 5h3v1h-3zM6 6h2v1h-2zM6 7h2v1h-2zM6 8h2v1h-2zM6 9h2v1h-2zM6 10h2v1h-2zM5 11h4v1h-4z"/></svg>
<svg class="a ic" style="left:347px;top:55px" width="16" height="16" viewBox="0 0 16 16" shape-rendering="crispEdges"><path fill="#000080" d="M4 0h2v1h-2zM3 1h1v1h-1zM5 1h1v1h-1zM3 2h1v1h-1zM5 2h1v1h-1zM4 10h1v1h-1zM14 10h1v1h-1z"/><path fill="#fff" d="M4 1h1v1h-1zM4 2h1v1h-1zM8 6h1v1h-1zM8 7h1v1h-1zM6 8h5v1h-5zM8 9h1v1h-1zM8 10h1v1h-1zM2 12h1v1h-1zM6 13h4v1h-4z"/><path fill="#000" d="M6 1h1v1h-1zM2 2h1v1h-1zM6 2h1v1h-1zM3 3h3v1h-3zM1 4h1v1h-1zM8 4h1v1h-1zM1 5h1v1h-1zM6 5h3v1h-3zM10 5h1v1h-1zM5 6h1v1h-1zM7 6h1v1h-1zM9 6h3v1h-3zM0 7h1v1h-1zM5 7h3v1h-3zM9 7h3v1h-3zM0 8h1v1h-1zM5 8h1v1h-1zM11 8h2v1h-2zM14 8h2v1h-2zM0 9h1v1h-1zM5 9h1v1h-1zM7 9h1v1h-1zM9 9h1v1h-1zM11 9h1v1h-1zM5 10h3v1h-3zM9 10h2v1h-2zM6 11h5v1h-5zM5 12h1v1h-1zM12 12h1v1h-1zM1 13h1v1h-1zM5 13h1v1h-1zM11 13h1v1h-1zM1 14h9v1h-9zM2 15h2v1h-2z"/><path fill="#c0c0c0" d="M8 1h2v1h-2zM10 2h1v1h-1zM11 3h1v1h-1zM12 4h1v1h-1zM12 5h1v1h-1z"/><path fill="#808000" d="M9 5h1v1h-1zM6 6h1v1h-1zM6 9h1v1h-1zM10 9h1v1h-1z"/><path fill="#00a000" d="M13 8h1v1h-1zM13 9h1v1h-1z"/><path fill="#008080" d="M1 10h1v1h-1z"/><path fill="#c80000" d="M2 10h2v1h-2zM1 11h4v1h-4zM1 12h1v1h-1zM3 12h2v1h-2zM2 13h3v1h-3z"/></svg>
<!-- ICONS END -->
</div>
</body></html>
